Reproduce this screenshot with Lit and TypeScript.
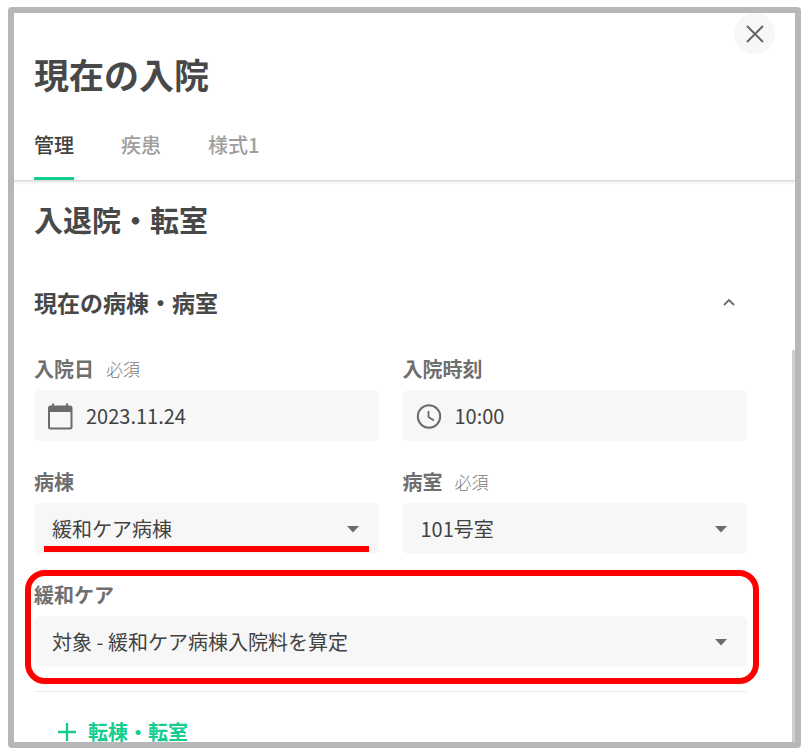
import { LitElement, html, css } from "lit";
import { customElement, property, state } from "lit/decorators.js";
import { classMap } from "lit/directives/class-map.js";

const fieldStyles = css`
  :host {
    display: block;
    min-width: 0;
  }
  * {
    box-sizing: border-box;
  }
  .label {
    display: flex;
    align-items: center;
    gap: 12px;
    height: 28px;
    margin-bottom: 7px;
    font-size: 20px;
    line-height: 28px;
    font-weight: 700;
    color: #6f6f6f;
  }
  .required {
    font-size: 17px;
    font-weight: 300;
    color: #7a7a7a;
  }
  .box {
    position: relative;
    display: flex;
    align-items: center;
    height: 51px;
    border-radius: 6px;
    background: #f7f7f7;
  }
  .control {
    flex: 1;
    min-width: 0;
    width: 100%;
    height: 51px;
    margin: 0;
    padding: 0;
    border: 0;
    border-radius: 6px;
    outline: 0;
    appearance: none;
    background: transparent;
    color: #424242;
    font-family: inherit;
    font-size: 20px;
    line-height: 28px;
  }
`;

@customElement("text-field")
class TextField extends LitElement {
  @property() label = "";
  @property() value = "";
  @property() icon = "calendar";
  @property({ type: Boolean }) required = false;

  static styles = [
    fieldStyles,
    css`
      .box {
        gap: 12px;
        padding: 0 12px;
      }
      .icon {
        flex: none;
        width: 28px;
        height: 28px;
      }
    `,
  ];

  render() {
    return html`
      <label class="label" for="control">
        ${this.label}
        ${this.required ? html`<span class="required">必須</span>` : null}
      </label>
      <div class="box">
        ${this.icon === "calendar"
          ? html`<svg class="icon" viewBox="0 0 28 28" aria-hidden="true">
              <path
                fill="#6b6b6b"
                fill-rule="evenodd"
                d="M6 1.500h2v2h12v-2h2v2h2a2.500 2.500 0 0 1 2.500 2.500v19a2.500 2.500 0 0 1-2.500 2.500h-19.500a2.500 2.500 0 0 1-2.500-2.500v-19a2.500 2.500 0 0 1 2.500-2.500h1.500zM4 10v15.500h20.500v-15.500z"
              />
            </svg>`
          : html`<svg class="icon" viewBox="0 0 28 28" aria-hidden="true">
              <circle cx="14" cy="14.500" r="11.200" fill="none" stroke="#6b6b6b" stroke-width="2" />
              <path d="M13.500 9v6l5.500 3.500" fill="none" stroke="#6b6b6b" stroke-width="1.800" />
            </svg>`}
        <input class="control" id="control" type="text" .value=${this.value} />
      </div>
    `;
  }
}

@customElement("select-field")
class SelectField extends LitElement {
  @property() label = "";
  @property() value = "";
  @property({ type: Boolean }) required = false;
  @property({ type: Boolean }) underlined = false;

  static styles = [
    fieldStyles,
    css`
      .control {
        padding: 0 40px 0 18px;
      }
      .caret {
        position: absolute;
        right: 20px;
        top: 23px;
        width: 12px;
        height: 7px;
        pointer-events: none;
      }
      .underlined::after {
        content: "";
        position: absolute;
        left: 10px;
        right: 10px;
        bottom: 2px;
        height: 6px;
        background: #ff0000;
      }
    `,
  ];

  render() {
    return html`
      <label class="label" for="control">
        ${this.label}
        ${this.required ? html`<span class="required">必須</span>` : null}
      </label>
      <div class=${classMap({ box: true, underlined: this.underlined })}>
        <select class="control" id="control">
          <option>${this.value}</option>
        </select>
        <svg class="caret" viewBox="0 0 12 7" aria-hidden="true">
          <path d="M0 0h12l-6 6.500z" fill="#6b6b6b" />
        </svg>
      </div>
    `;
  }
}

@customElement("app-root")
class AppRoot extends LitElement {
  @state() tab = "管理";

  static styles = css`
    :host {
      display: block;
      box-sizing: border-box;
      height: 100vh;
      padding: 7px 8px 8px;
      background: #fff;
      color: #424242;
      font-family: "Noto Sans CJK JP", sans-serif;
    }
    * {
      box-sizing: border-box;
    }
    h1,
    h2,
    h3 {
      margin: 0;
      color: #484848;
      font-weight: 700;
    }
    button {
      margin: 0;
      padding: 0;
      border: 0;
      background: none;
      color: inherit;
      font-family: inherit;
      cursor: pointer;
    }
    .panel {
      position: relative;
      display: flex;
      flex-direction: column;
      height: 100%;
      overflow: hidden;
      border: 6px solid #b7b7b7;
      border-radius: 4px;
      background: #fff;
    }
    .header {
      flex: none;
      padding: 0 20px;
      border-bottom: 1px solid #d9d9d9;
      box-shadow: 0 1px 3px rgba(0, 0, 0, 0.14);
    }
    .top {
      display: flex;
      justify-content: space-between;
      align-items: flex-start;
    }
    h1 {
      padding-top: 37px;
      font-size: 35px;
      line-height: 48px;
    }
    .close {
      display: grid;
      place-items: center;
      width: 41px;
      height: 41px;
      border-radius: 50%;
      background: #f7f7f7;
    }
    .close svg {
      width: 18px;
      height: 18px;
    }
    .tabs {
      display: flex;
      gap: 47px;
      margin-top: 16px;
    }
    .tab {
      padding-bottom: 2px;
      border-bottom: 3px solid transparent;
      color: #9e9e9e;
      font-size: 20px;
      font-weight: 500;
      line-height: 61px;
    }
    .selected {
      border-color: #13ce8f;
      color: #424242;
    }
    .body {
      flex: 1;
      min-height: 0;
      overflow: hidden;
      padding: 18px 48px 0 20px;
    }
    h2 {
      font-size: 29px;
      line-height: 40px;
    }
    .section {
      display: flex;
      align-items: center;
      justify-content: space-between;
      margin: 43px 0 33px;
    }
    h3 {
      font-size: 23px;
      line-height: 40px;
    }
    .toggle {
      display: grid;
      place-items: center;
      width: 36px;
      height: 36px;
    }
    .toggle svg {
      width: 12px;
      height: 8px;
    }
    .grid {
      display: grid;
      grid-template-columns: 1fr 1fr;
      gap: 27px 24px;
      padding-bottom: 24px;
      border-bottom: 1px solid #eeeeee;
    }
    .highlight {
      position: relative;
      grid-column: 1 / -1;
    }
    .highlight::after {
      content: "";
      position: absolute;
      inset: -11px -12px -17px -9px;
      border: 6px solid #ff0000;
      border-radius: 20px;
      pointer-events: none;
    }
    .add {
      display: flex;
      align-items: center;
      gap: 12px;
      margin: 30px 0 0 24px;
      color: #13ce8f;
      font-size: 20px;
      font-weight: 700;
      line-height: 20px;
    }
    .add svg {
      width: 18px;
      height: 18px;
    }
    .scrollbar {
      position: absolute;
      top: 337px;
      right: 0;
      bottom: 0;
      width: 3px;
      background: #cdcdcd;
    }
  `;

  render() {
    return html`
      <main class="panel">
        <header class="header">
          <div class="top">
            <h1>現在の入院</h1>
            <button class="close" aria-label="閉じる">
              <svg viewBox="0 0 18 18" aria-hidden="true">
                <path d="M1 1l16 16M17 1l-16 16" stroke="#616161" stroke-width="1.800" />
              </svg>
            </button>
          </div>
          <nav class="tabs" role="tablist">
            ${["管理", "疾患", "様式1"].map(
              (name) => html`<button
                class=${classMap({ tab: true, selected: name === this.tab })}
                role="tab"
                aria-selected=${name === this.tab}
                @click=${() => (this.tab = name)}
              >${name}</button>`
            )}
          </nav>
        </header>
        <div class="body">
          <h2>入退院・転室</h2>
          <div class="section">
            <h3>現在の病棟・病室</h3>
            <button class="toggle" aria-label="折りたたむ">
              <svg viewBox="0 0 12 8" aria-hidden="true">
                <path d="M1 7l5-5 5 5" fill="none" stroke="#6b6b6b" stroke-width="1.800" />
              </svg>
            </button>
          </div>
          <div class="grid">
            <text-field label="入院日" value="2023.11.24" icon="calendar" required></text-field>
            <text-field label="入院時刻" value="10:00" icon="clock"></text-field>
            <select-field label="病棟" value="緩和ケア病棟" underlined></select-field>
            <select-field label="病室" value="101号室" required></select-field>
            <div class="highlight">
              <select-field label="緩和ケア" value="対象 - 緩和ケア病棟入院料を算定"></select-field>
            </div>
          </div>
          <button class="add">
            <svg viewBox="0 0 18 18" aria-hidden="true">
              <path d="M9 0v18M0 9h18" stroke="currentColor" stroke-width="2.400" />
            </svg>
            転棟・転室
          </button>
        </div>
        <div class="scrollbar"></div>
      </main>
    `;
  }
}
